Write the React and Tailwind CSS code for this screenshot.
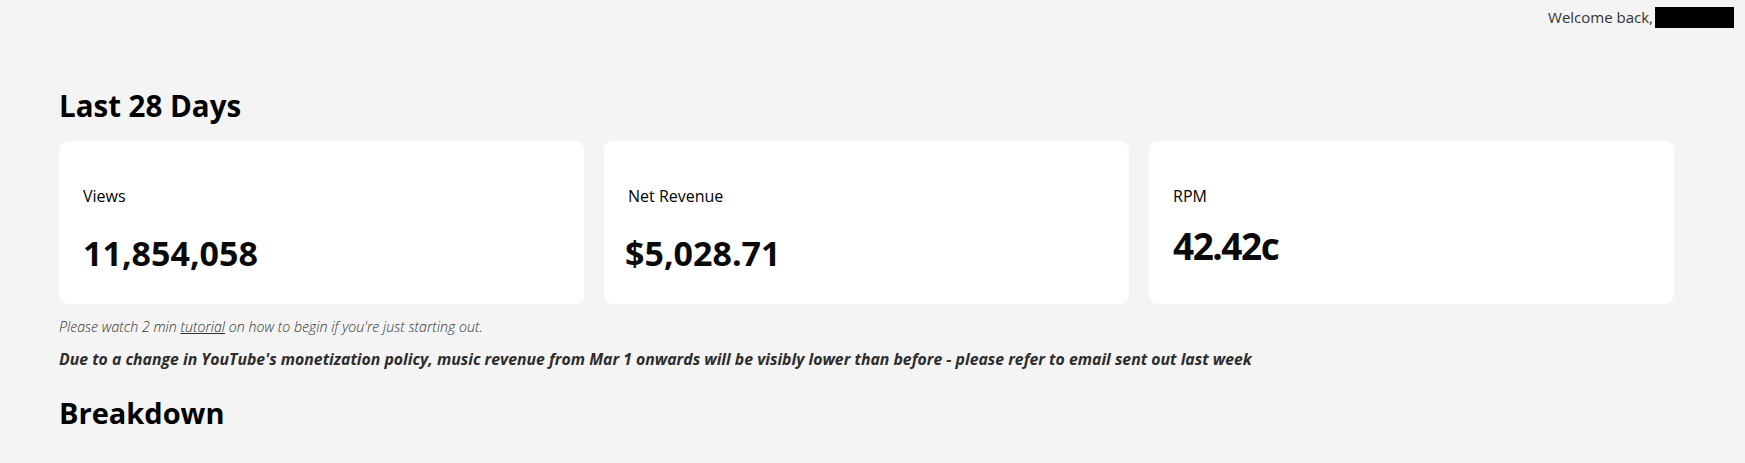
import React from "react";

const stats = [
  { label: "Views", value: "11,854,058", valueClass: "mt-[25px] text-[34px] leading-[40px]" },
  { label: "Net Revenue", value: "$5,028.71", valueClass: "mt-[25px] text-[34px] leading-[40px] -ml-[3px]" },
  { label: "RPM", value: "42.42c", valueClass: "mt-[18px] text-[37px] leading-[40px] tracking-[-1.5px]" },
];

function StatCard({ label, value, valueClass }) {
  return (
    <div className="h-[163px] rounded-[9px] bg-white pl-[24px] pt-[43px]">
      <p className="text-[16px] leading-[24px] text-black">{label}</p>
      <p className={`font-bold text-[#0a0a0a] ${valueClass}`}>{value}</p>
    </div>
  );
}

export default function App() {
  return (
    <div className="min-h-screen bg-[#f4f4f4] font-['Open_Sans',sans-serif] text-black">
      <header className="flex h-[28px] items-end justify-end pr-[11px]">
        <span className="mr-[2px] text-[15px] leading-[21px] text-[#333333]">Welcome back,</span>
        <span className="inline-block h-[21px] w-[79px] bg-black" />
      </header>

      <main className="pl-[59px] pr-[71px]">
        <h1 className="mt-[58px] text-[29.5px] font-bold leading-[40px]">Last 28 Days</h1>

        <div className="mt-[15px] grid grid-cols-3 gap-[20px]">
          {stats.map((stat) => (
            <StatCard key={stat.label} {...stat} />
          ))}
        </div>

        <p className="mt-[13px] text-[14.2px] font-light italic leading-[20px] text-[#333333]">
          Please watch 2 min <span className="underline">tutorial</span> on how to begin if you're just starting out.
        </p>
        <p className="mt-[12px] text-[15.8px] font-bold italic leading-[20px] text-[#2d2d2d]">
          Due to a change in YouTube's monetization policy, music revenue from Mar 1 onwards will be visibly lower than
          before - please refer to email sent out last week
        </p>

        <h2 className="mt-[24px] text-[29px] font-bold leading-[40px]">Breakdown</h2>
      </main>
    </div>
  );
}
